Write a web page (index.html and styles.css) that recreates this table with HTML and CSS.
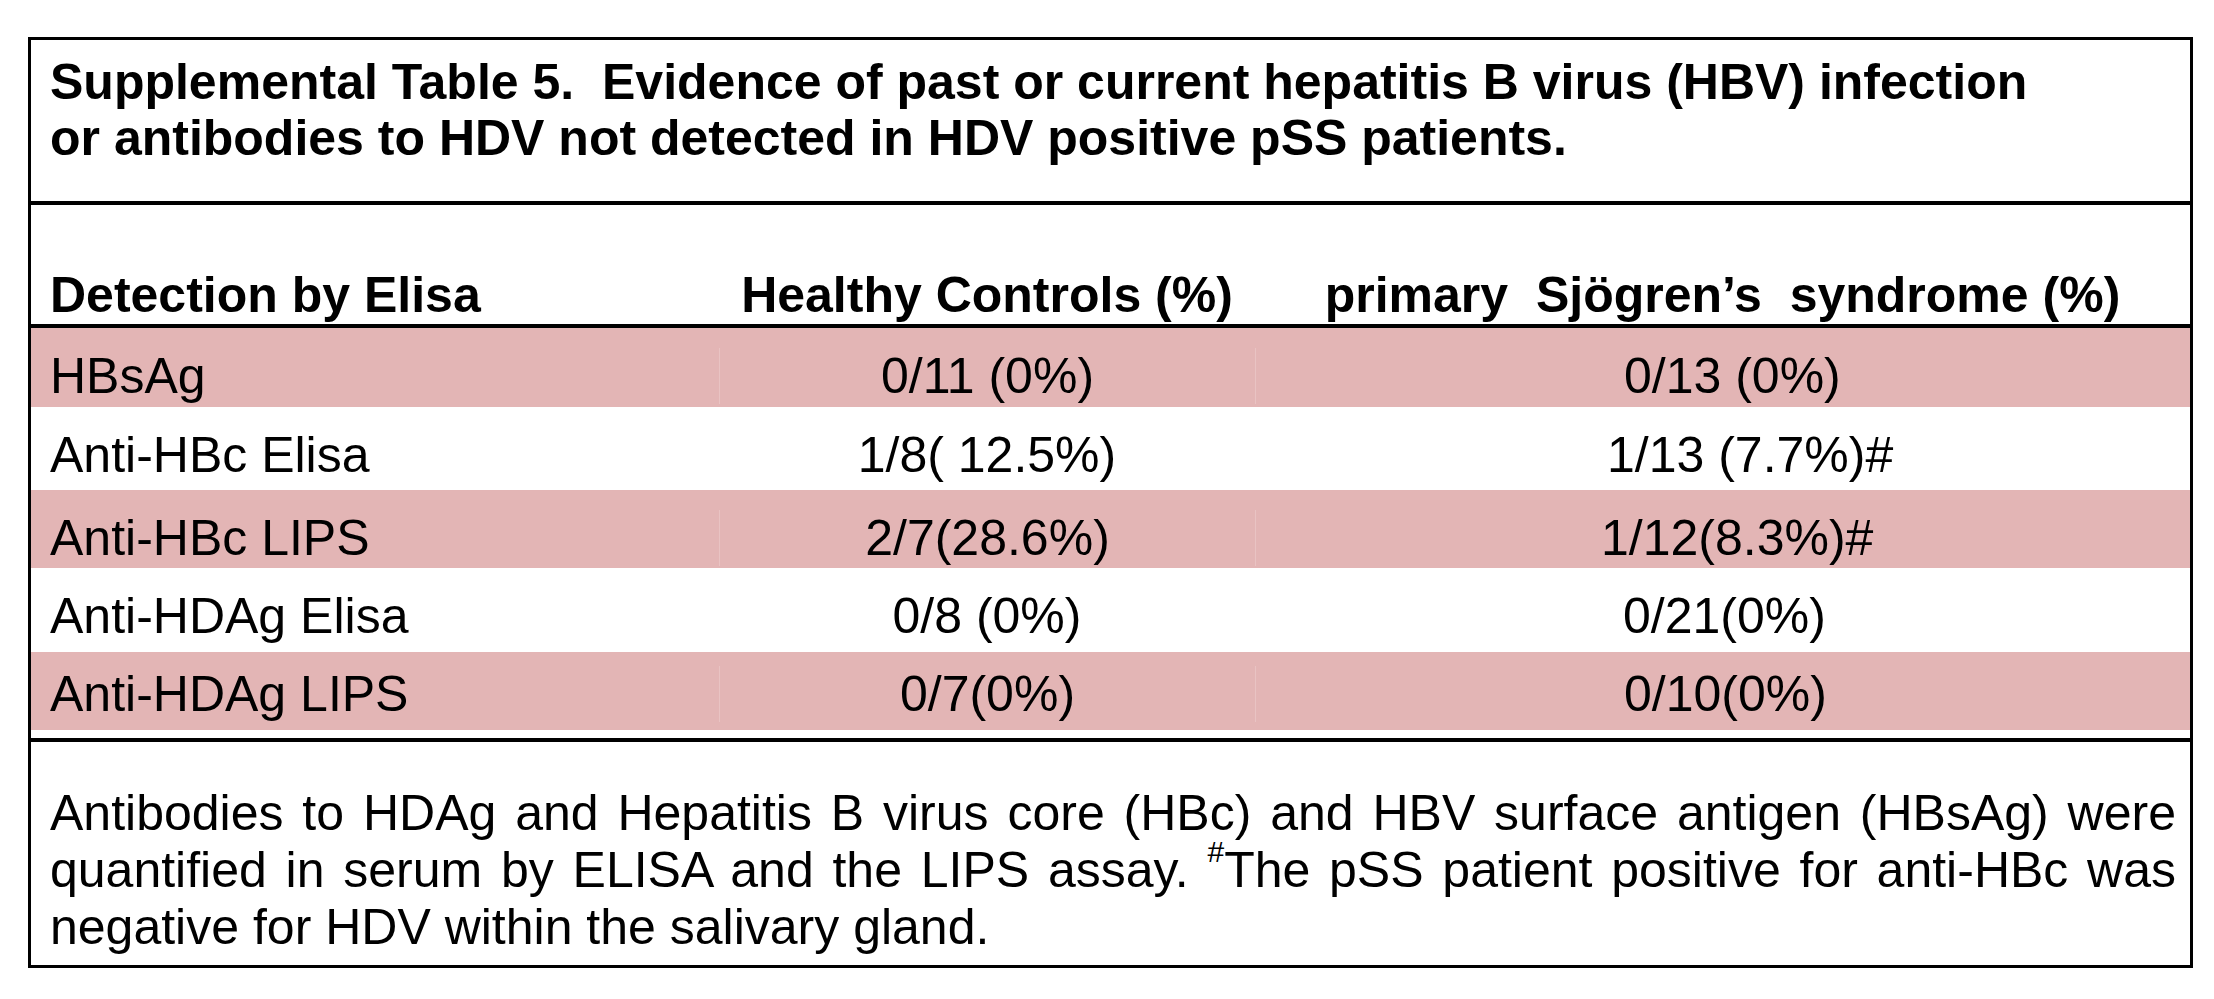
FILE: index.html
```html
<!DOCTYPE html>
<html lang="en">
<head>
<meta charset="utf-8">
<title>Supplemental Table 5</title>
<link rel="stylesheet" href="styles.css">
</head>
<body>
<div class="sheet">
  <div class="caption">
    <span class="caption-line">Supplemental Table 5.&nbsp; Evidence of past or current hepatitis B virus (HBV) infection</span>
    <span class="caption-line">or antibodies to HDV not detected in HDV positive pSS patients.</span>
  </div>
  <div class="thead">
    <div class="row head">
      <div class="cell c1">Detection by Elisa</div>
      <div class="cell c2">Healthy Controls (%)</div>
      <div class="cell c3h">primary&nbsp; Sjögren’s&nbsp; syndrome (%)</div>
    </div>
  </div>
  <div class="tbody">
    <div class="row shade r1">
      <div class="cell c1">HBsAg</div>
      <div class="cell c2">0/11 (0%)</div>
      <div class="cell c3">0/13 (0%)</div>
    </div>
    <div class="row r2">
      <div class="cell c1">Anti-HBc Elisa</div>
      <div class="cell c2">1/8( 12.5%)</div>
      <div class="cell c3 nudge-a">1/13 (7.7%)#</div>
    </div>
    <div class="row shade r3">
      <div class="cell c1">Anti-HBc LIPS</div>
      <div class="cell c2">2/7(28.6%)</div>
      <div class="cell c3 nudge-b">1/12(8.3%)#</div>
    </div>
    <div class="row r4">
      <div class="cell c1">Anti-HDAg Elisa</div>
      <div class="cell c2">0/8 (0%)</div>
      <div class="cell c3">0/21(0%)</div>
    </div>
    <div class="row shade r5">
      <div class="cell c1">Anti-HDAg LIPS</div>
      <div class="cell c2">0/7(0%)</div>
      <div class="cell c3">0/10(0%)</div>
    </div>
  </div>
  <p class="note">Antibodies to HDAg and Hepatitis B virus core (HBc) and HBV surface antigen (HBsAg) were quantified in serum by ELISA and the LIPS assay. <sup class="mark">#</sup>The pSS patient positive for anti-HBc was negative for HDV within the salivary gland.</p>
</div>
</body>
</html>
```

FILE: styles.css
```css
html, body {
  margin: 0;
  padding: 0;
  background: #ffffff;
}

body {
  font-family: "Liberation Sans", Arial, sans-serif;
  font-size: 50px;
  line-height: 56px;
  color: #000000;
}

.sheet {
  box-sizing: border-box;
  width: 2165px;
  margin: 37px 0 0 28px;
  border: 3px solid #000000;
}

.caption {
  padding: 14px 19px 35px;
  font-weight: bold;
  border-bottom: 4px solid #000000;
}

.caption-line {
  display: block;
  white-space: nowrap;
}

.thead {
  padding-top: 62px;
  padding-bottom: 1px;
  border-bottom: 4px solid #000000;
}

.row {
  display: grid;
  grid-template-columns: 688px 536px 1fr;
  white-space: nowrap;
}

.head {
  font-weight: bold;
}

.cell {
  min-width: 0;
}

.c1 {
  padding-left: 19px;
}

.c2 {
  text-align: center;
}

.c3h {
  text-align: center;
}

.c3 {
  padding-left: 368px;
}

.c3.nudge-a {
  padding-left: 352px;
}

.c3.nudge-b {
  padding-left: 345px;
}

.tbody {
  padding-bottom: 8px;
  border-bottom: 4px solid #000000;
}

.shade {
  background: #e3b5b5;
}

.shade .c2,
.shade .c3 {
  border-left: 1px solid #e9c3c3;
}

.r1 { padding: 20px 0 3px; }
.r2 { padding: 20px 0 7px; }
.r3 { padding: 20px 0 2px; }
.r4 { padding: 20px 0 8px; }
.r5 { padding: 14px 0 8px; }

.note {
  margin: 0;
  padding: 43px 14px 9px 19px;
  line-height: 57px;
  text-align: justify;
}

.mark {
  font-size: 30px;
  line-height: 0;
  vertical-align: 25px;
}
```
